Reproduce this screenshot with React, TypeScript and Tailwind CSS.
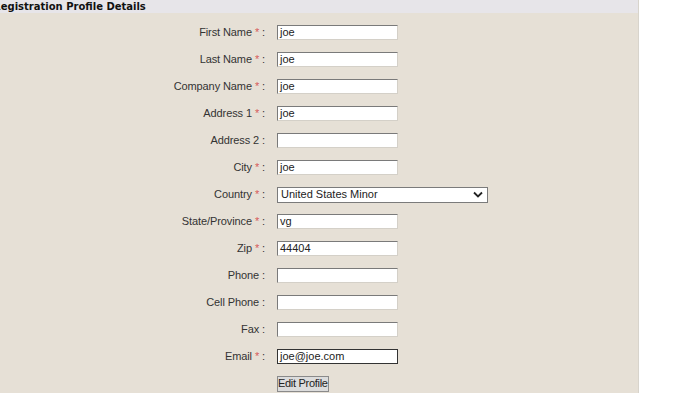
import React from 'react';

const fields = [
  { label: 'First Name', required: true, value: 'joe' },
  { label: 'Last Name', required: true, value: 'joe' },
  { label: 'Company Name', required: true, value: 'joe' },
  { label: 'Address 1', required: true, value: 'joe' },
  { label: 'Address 2', required: false, value: '' },
  { label: 'City', required: true, value: 'joe' },
  { label: 'Country', required: true, value: 'United States Minor', select: true },
  { label: 'State/Province', required: true, value: 'vg' },
  { label: 'Zip', required: true, value: '44404' },
  { label: 'Phone', required: false, value: '' },
  { label: 'Cell Phone', required: false, value: '' },
  { label: 'Fax', required: false, value: '' },
  { label: 'Email', required: true, value: 'joe@joe.com', focus: true },
];

const App = () => {
  return (
    <div className="w-[700px] h-[405px] bg-white overflow-hidden font-['Liberation_Sans',Arial,sans-serif]">
      <div className="w-[639px] border-r border-[#d8d4cc]">
        {/* Header */}
        <div className="h-[13px] bg-[#e7e5e9] flex items-center overflow-hidden">
          <span className="-ml-[7px] text-[10px] leading-none font-bold text-[#111] font-['DejaVu_Sans',Verdana,sans-serif]">
            Registration Profile Details
          </span>
        </div>

        {/* Form */}
        <div className="bg-[#e6e0d6] pt-[6px]">
          {fields.map((f) => (
            <div key={f.label} className="h-[27px] grid grid-cols-[265px_1fr] gap-[12px] items-center">
              <div className="text-right text-[11px] text-[#333] whitespace-nowrap tracking-[-0.1px]">
                {f.label}
                {f.required && <span className="text-[#d65a5a]"> *</span>}
                <span> :</span>
              </div>
              <div>
                {f.select ? (
                  <div className="w-[211px] h-[16px] bg-white border border-[#7b7b7b] flex items-center justify-between pl-[3px] pr-[4px] text-[11px] text-[#222]">
                    <span>{f.value}</span>
                    <svg width="10" height="7" viewBox="0 0 10 7">
                      <path d="M1 1.5 L5 5.5 L9 1.5" fill="none" stroke="#222" strokeWidth="1.8" />
                    </svg>
                  </div>
                ) : (
                  <div
                    className={`w-[121px] h-[15px] bg-white flex items-center pl-[2px] text-[11px] text-[#222] leading-none ${
                      f.focus
                        ? 'border border-[#333]'
                        : 'border border-t-[#7a7a7a] border-l-[#7a7a7a] border-b-[#d4d0c8] border-r-[#d4d0c8]'
                    }`}
                  >
                    {f.value}
                  </div>
                )}
              </div>
            </div>
          ))}
          <div className="h-[23px] grid grid-cols-[265px_1fr] gap-[12px] items-center">
            <div />
            <div>
              <button className="h-[16px] px-0 bg-[#dcdcdc] border border-[#8a8a8a] text-[11px] leading-none text-[#222] tracking-[-0.3px]">
                Edit Profile
              </button>
            </div>
          </div>
        </div>
      </div>
    </div>
  );
};

export default App;
